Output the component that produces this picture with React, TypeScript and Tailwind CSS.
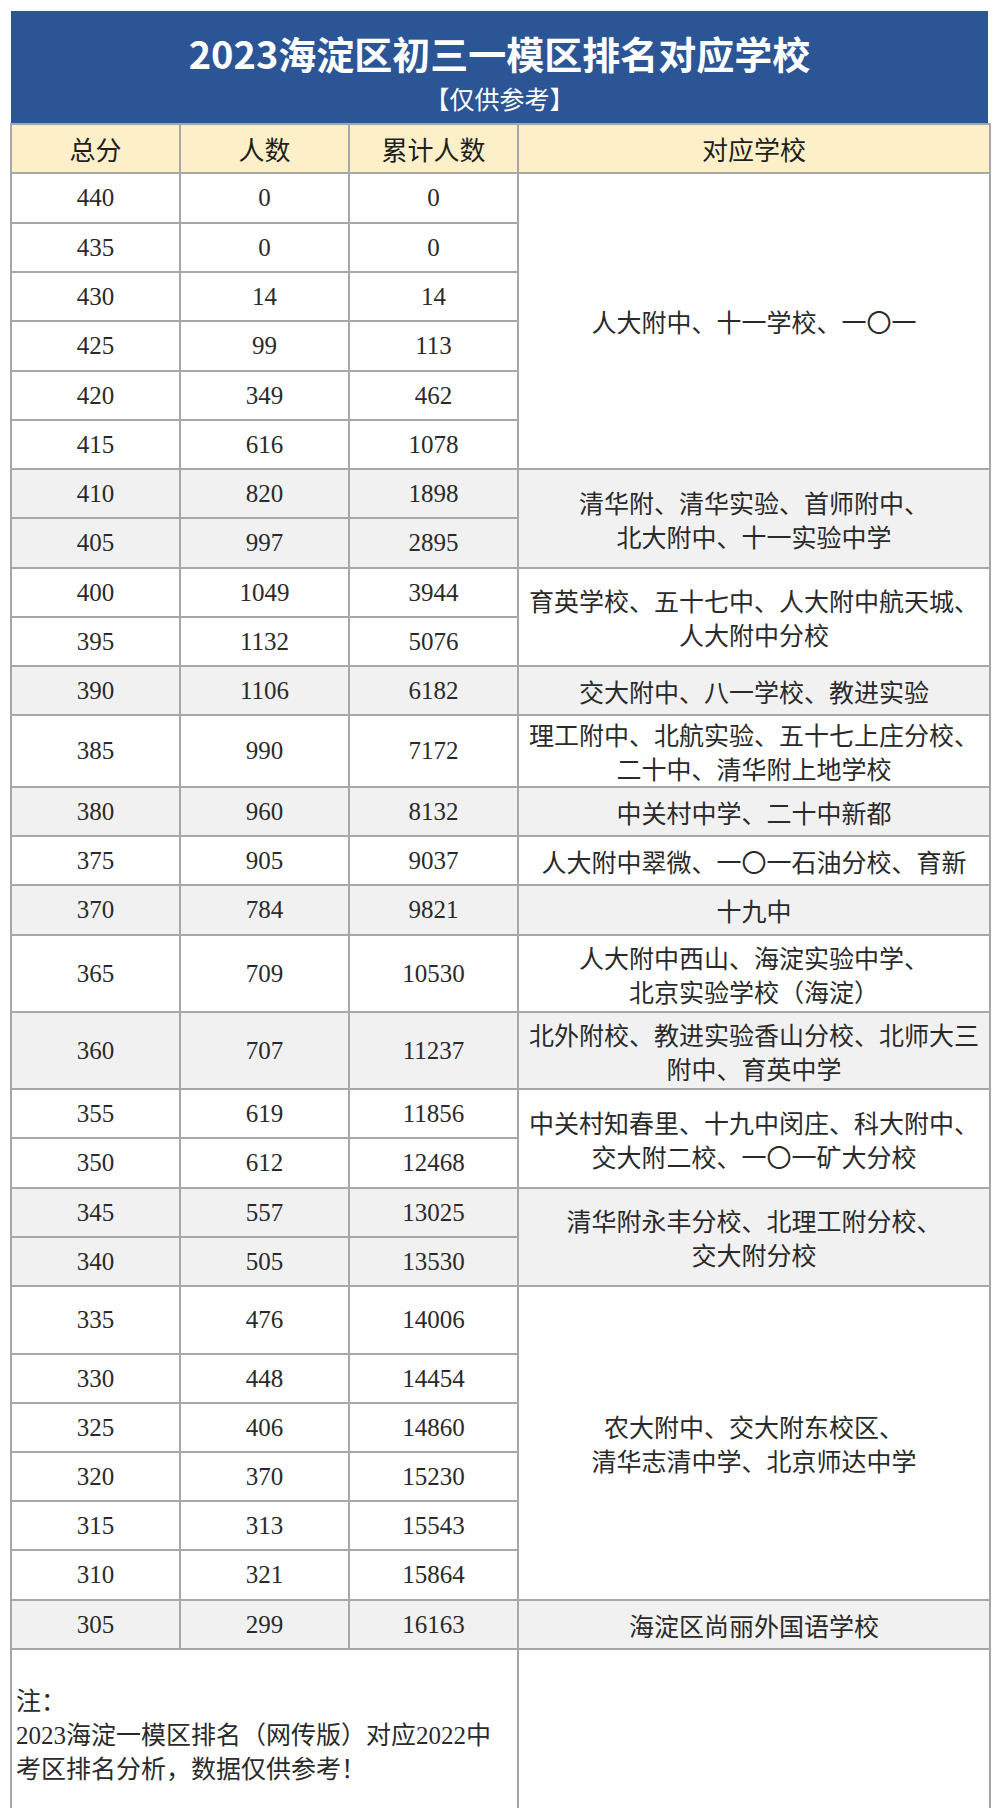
import React from "react";

type Row = { score: number; count: number; total: number; h: string };
type Group = { schools: string[]; shade: boolean; rows: Row[] };

const GROUPS: Group[] = [
  {
    schools: ["人大附中、十一学校、一〇一"],
    shade: false,
    rows: [
      { score: 440, count: 0, total: 0, h: "h-[50px]" },
      { score: 435, count: 0, total: 0, h: "h-[49px]" },
      { score: 430, count: 14, total: 14, h: "h-[49px]" },
      { score: 425, count: 99, total: 113, h: "h-[50px]" },
      { score: 420, count: 349, total: 462, h: "h-[49px]" },
      { score: 415, count: 616, total: 1078, h: "h-[49px]" },
    ],
  },
  {
    schools: ["清华附、清华实验、首师附中、", "北大附中、十一实验中学"],
    shade: true,
    rows: [
      { score: 410, count: 820, total: 1898, h: "h-[49px]" },
      { score: 405, count: 997, total: 2895, h: "h-[50px]" },
    ],
  },
  {
    schools: ["育英学校、五十七中、人大附中航天城、", "人大附中分校"],
    shade: false,
    rows: [
      { score: 400, count: 1049, total: 3944, h: "h-[49px]" },
      { score: 395, count: 1132, total: 5076, h: "h-[49px]" },
    ],
  },
  {
    schools: ["交大附中、八一学校、教进实验"],
    shade: true,
    rows: [{ score: 390, count: 1106, total: 6182, h: "h-[49px]" }],
  },
  {
    schools: ["理工附中、北航实验、五十七上庄分校、", "二十中、清华附上地学校"],
    shade: false,
    rows: [{ score: 385, count: 990, total: 7172, h: "h-[72px]" }],
  },
  {
    schools: ["中关村中学、二十中新都"],
    shade: true,
    rows: [{ score: 380, count: 960, total: 8132, h: "h-[49px]" }],
  },
  {
    schools: ["人大附中翠微、一〇一石油分校、育新"],
    shade: false,
    rows: [{ score: 375, count: 905, total: 9037, h: "h-[49px]" }],
  },
  {
    schools: ["十九中"],
    shade: true,
    rows: [{ score: 370, count: 784, total: 9821, h: "h-[50px]" }],
  },
  {
    schools: ["人大附中西山、海淀实验中学、", "北京实验学校（海淀）"],
    shade: false,
    rows: [{ score: 365, count: 709, total: 10530, h: "h-[77px]" }],
  },
  {
    schools: ["北外附校、教进实验香山分校、北师大三", "附中、育英中学"],
    shade: true,
    rows: [{ score: 360, count: 707, total: 11237, h: "h-[77px]" }],
  },
  {
    schools: ["中关村知春里、十九中闵庄、科大附中、", "交大附二校、一〇一矿大分校"],
    shade: false,
    rows: [
      { score: 355, count: 619, total: 11856, h: "h-[49px]" },
      { score: 350, count: 612, total: 12468, h: "h-[50px]" },
    ],
  },
  {
    schools: ["清华附永丰分校、北理工附分校、", "交大附分校"],
    shade: true,
    rows: [
      { score: 345, count: 557, total: 13025, h: "h-[49px]" },
      { score: 340, count: 505, total: 13530, h: "h-[49px]" },
    ],
  },
  {
    schools: ["农大附中、交大附东校区、", "清华志清中学、北京师达中学"],
    shade: false,
    rows: [
      { score: 335, count: 476, total: 14006, h: "h-[68px]" },
      { score: 330, count: 448, total: 14454, h: "h-[49px]" },
      { score: 325, count: 406, total: 14860, h: "h-[49px]" },
      { score: 320, count: 370, total: 15230, h: "h-[49px]" },
      { score: 315, count: 313, total: 15543, h: "h-[49px]" },
      { score: 310, count: 321, total: 15864, h: "h-[50px]" },
    ],
  },
  {
    schools: ["海淀区尚丽外国语学校"],
    shade: true,
    rows: [{ score: 305, count: 299, total: 16163, h: "h-[49px]" }],
  },
];

const cell = "border-2 border-[#a7a7a7] text-center align-middle p-0";
const serif = "font-['Liberation_Serif','Noto_Sans_CJK_SC',serif]";
const num = `${serif} text-[25px] text-[#2a2a2a]`;

export default function App() {
  return (
    <div className="min-h-[1817px] bg-white pt-[11px] pb-[10px] font-['Noto_Sans_CJK_SC',sans-serif]">
      <div className="ml-[11px] h-[112px] w-[977px] bg-[#2c5596] pt-[20px] text-center text-white">
        <div className="text-[38px] font-bold leading-[44px]">2023海淀区初三一模区排名对应学校</div>
        <div className="mt-[8px] text-[25px] leading-[30px]">【仅供参考】</div>
      </div>

      <table className="ml-[10px] w-[979px] table-fixed border-collapse">
        <colgroup>
          <col className="w-[169px]" />
          <col className="w-[169px]" />
          <col className="w-[169px]" />
          <col className="w-[472px]" />
        </colgroup>
        <thead>
          <tr className="h-[49px] bg-[#fdf0c9] text-[26px] text-[#1f1f1f]">
            <th className={`${cell} font-normal`}>总分</th>
            <th className={`${cell} font-normal`}>人数</th>
            <th className={`${cell} font-normal`}>累计人数</th>
            <th className={`${cell} font-normal`}>对应学校</th>
          </tr>
        </thead>
        <tbody>
          {GROUPS.map((g) =>
            g.rows.map((r, i) => (
              <tr key={r.score} className={`${r.h} ${g.shade ? "bg-[#f1f1f1]" : "bg-white"}`}>
                <td className={`${cell} ${num}`}>{r.score}</td>
                <td className={`${cell} ${num}`}>{r.count}</td>
                <td className={`${cell} ${num}`}>{r.total}</td>
                {i === 0 && (
                  <td rowSpan={g.rows.length} className={`${cell} text-[25px] leading-[34px] text-[#2a2a2a]`}>
                    {g.schools.map((s) => (
                      <div key={s} className="whitespace-nowrap">
                        {s}
                      </div>
                    ))}
                  </td>
                )}
              </tr>
            ))
          )}
          {/* footer note: no bottom rule in the original */}
          <tr className="h-[159px]">
            <td
              colSpan={3}
              className={`border-x-2 border-t-2 border-b-0 border-[#a7a7a7] pl-[4px] pt-[14px] text-left align-middle ${serif} text-[25px] leading-[34px] text-[#2a2a2a]`}
            >
              <div>注：</div>
              <div className="whitespace-nowrap">2023海淀一模区排名（网传版）对应2022中</div>
              <div className="whitespace-nowrap">考区排名分析，数据仅供参考！</div>
            </td>
            <td className="border-x-2 border-t-2 border-b-0 border-[#a7a7a7]" />
          </tr>
        </tbody>
      </table>
    </div>
  );
}
